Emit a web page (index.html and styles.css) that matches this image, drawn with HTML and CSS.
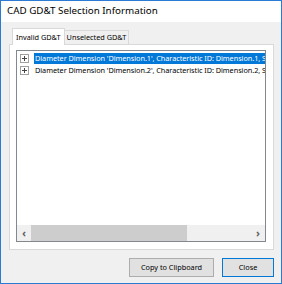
FILE: index.html
```html
<!DOCTYPE html>
<html>
<head>
<meta charset="utf-8">
<link rel="stylesheet" href="styles.css">
</head>
<body>
<div class="window">
  <div class="titlebar">CAD GD&amp;T Selection Information</div>
  <div class="body">
    <div class="tabs">
      <div class="tab active">Invalid GD&amp;T</div>
      <div class="tab">Unselected GD&amp;T</div>
    </div>
    <div class="panel">
      <div class="tree">
        <div class="rows">
          <div class="row sel"><span class="plus"></span><span class="label">Diameter Dimension 'Dimension.1', Characteristic ID: Dimension.1, Selected</span></div>
          <div class="row"><span class="plus"></span><span class="label">Diameter Dimension 'Dimension.2', Characteristic ID: Dimension.2, Source</span></div>
        </div>
        <div class="hscroll">
          <span class="arrow">&#8249;</span>
          <div class="track"><div class="thumb"></div></div>
          <span class="arrow">&#8250;</span>
        </div>
      </div>
    </div>
    <div class="buttons">
      <div class="btn copy">Copy to Clipboard</div>
      <div class="btn close">Close</div>
    </div>
  </div>
</div>
</body>
</html>
```
FILE: styles.css
```css
html, body { margin: 0; padding: 0; }
body {
  width: 282px; height: 284px; overflow: hidden;
  font-family: "Noto Sans", "Open Sans", sans-serif;
  font-size: 7.3px; color: #000;
}
.window {
  box-sizing: border-box;
  width: 282px; height: 284px;
  border: 1px solid #2b7ad3;
  display: flex; flex-direction: column;
  background: #f0f0f0;
}
.titlebar {
  height: 21px; background: #fff;
  padding-left: 6px;
  line-height: 20px; font-size: 9.8px;
}
.body { flex: 1; padding: 6px 7px 0 8px; display: flex; flex-direction: column; }
.tabs { display: flex; height: 16px; align-items: flex-end; padding-left: 3px; }
.tab {
  box-sizing: border-box;
  border: 1px solid #d9d9d9; border-bottom: none;
  background: #f0f0f0;
  height: 14px; line-height: 13px;
  padding: 0 2px;
}
.tab.active {
  height: 17px; background: #fff; line-height: 16px;
  position: relative; top: 1px; margin-right: -1px; z-index: 1;
  padding: 0 3px;
}
.panel {
  box-sizing: border-box;
  height: 206px;
  border: 1px solid #d9d9d9; background: #fff;
  padding: 5px 7px 7px 6px;
}
.tree {
  box-sizing: border-box;
  height: 100%;
  border: 1px solid #828790; background: #fff;
  display: flex; flex-direction: column;
}
.rows { flex: 1; padding-top: 2px; overflow: hidden; }
.row { display: flex; align-items: center; height: 11px; white-space: nowrap; overflow: hidden; }
.row + .row { margin-top: 1px; }
.plus {
  flex: none; box-sizing: border-box;
  width: 9px; height: 9px; border: 1px solid #a0a0a0; margin: 0 5px 0 3px;
  background: linear-gradient(#444,#444) center/5px 1px no-repeat, linear-gradient(#444,#444) center/1px 5px no-repeat, #fff;
}
.label { padding: 0 1px; line-height: 11px; letter-spacing: -0.05px; }
.row.sel .label { background: #0078d7; color: #fff; flex: 1; }
.hscroll { height: 16px; display: flex; align-items: center; background: #f0f0f0; }
.arrow { width: 14px; text-align: center; font-size: 11px; font-weight: bold; color: #606060; line-height: 16px; }
.track { flex: 1; height: 16px; }
.thumb { width: 156px; height: 16px; background: #cdcdcd; }
.buttons { display: flex; justify-content: flex-end; gap: 8px; margin-top: 8px; }
.btn {
  box-sizing: border-box; height: 19px; line-height: 17px;
  border: 1px solid #adadad; background: #e1e1e1;
  text-align: center;
}
.btn.copy { width: 85px; }
.btn.close { width: 52px; border-color: #0078d7; }
```
